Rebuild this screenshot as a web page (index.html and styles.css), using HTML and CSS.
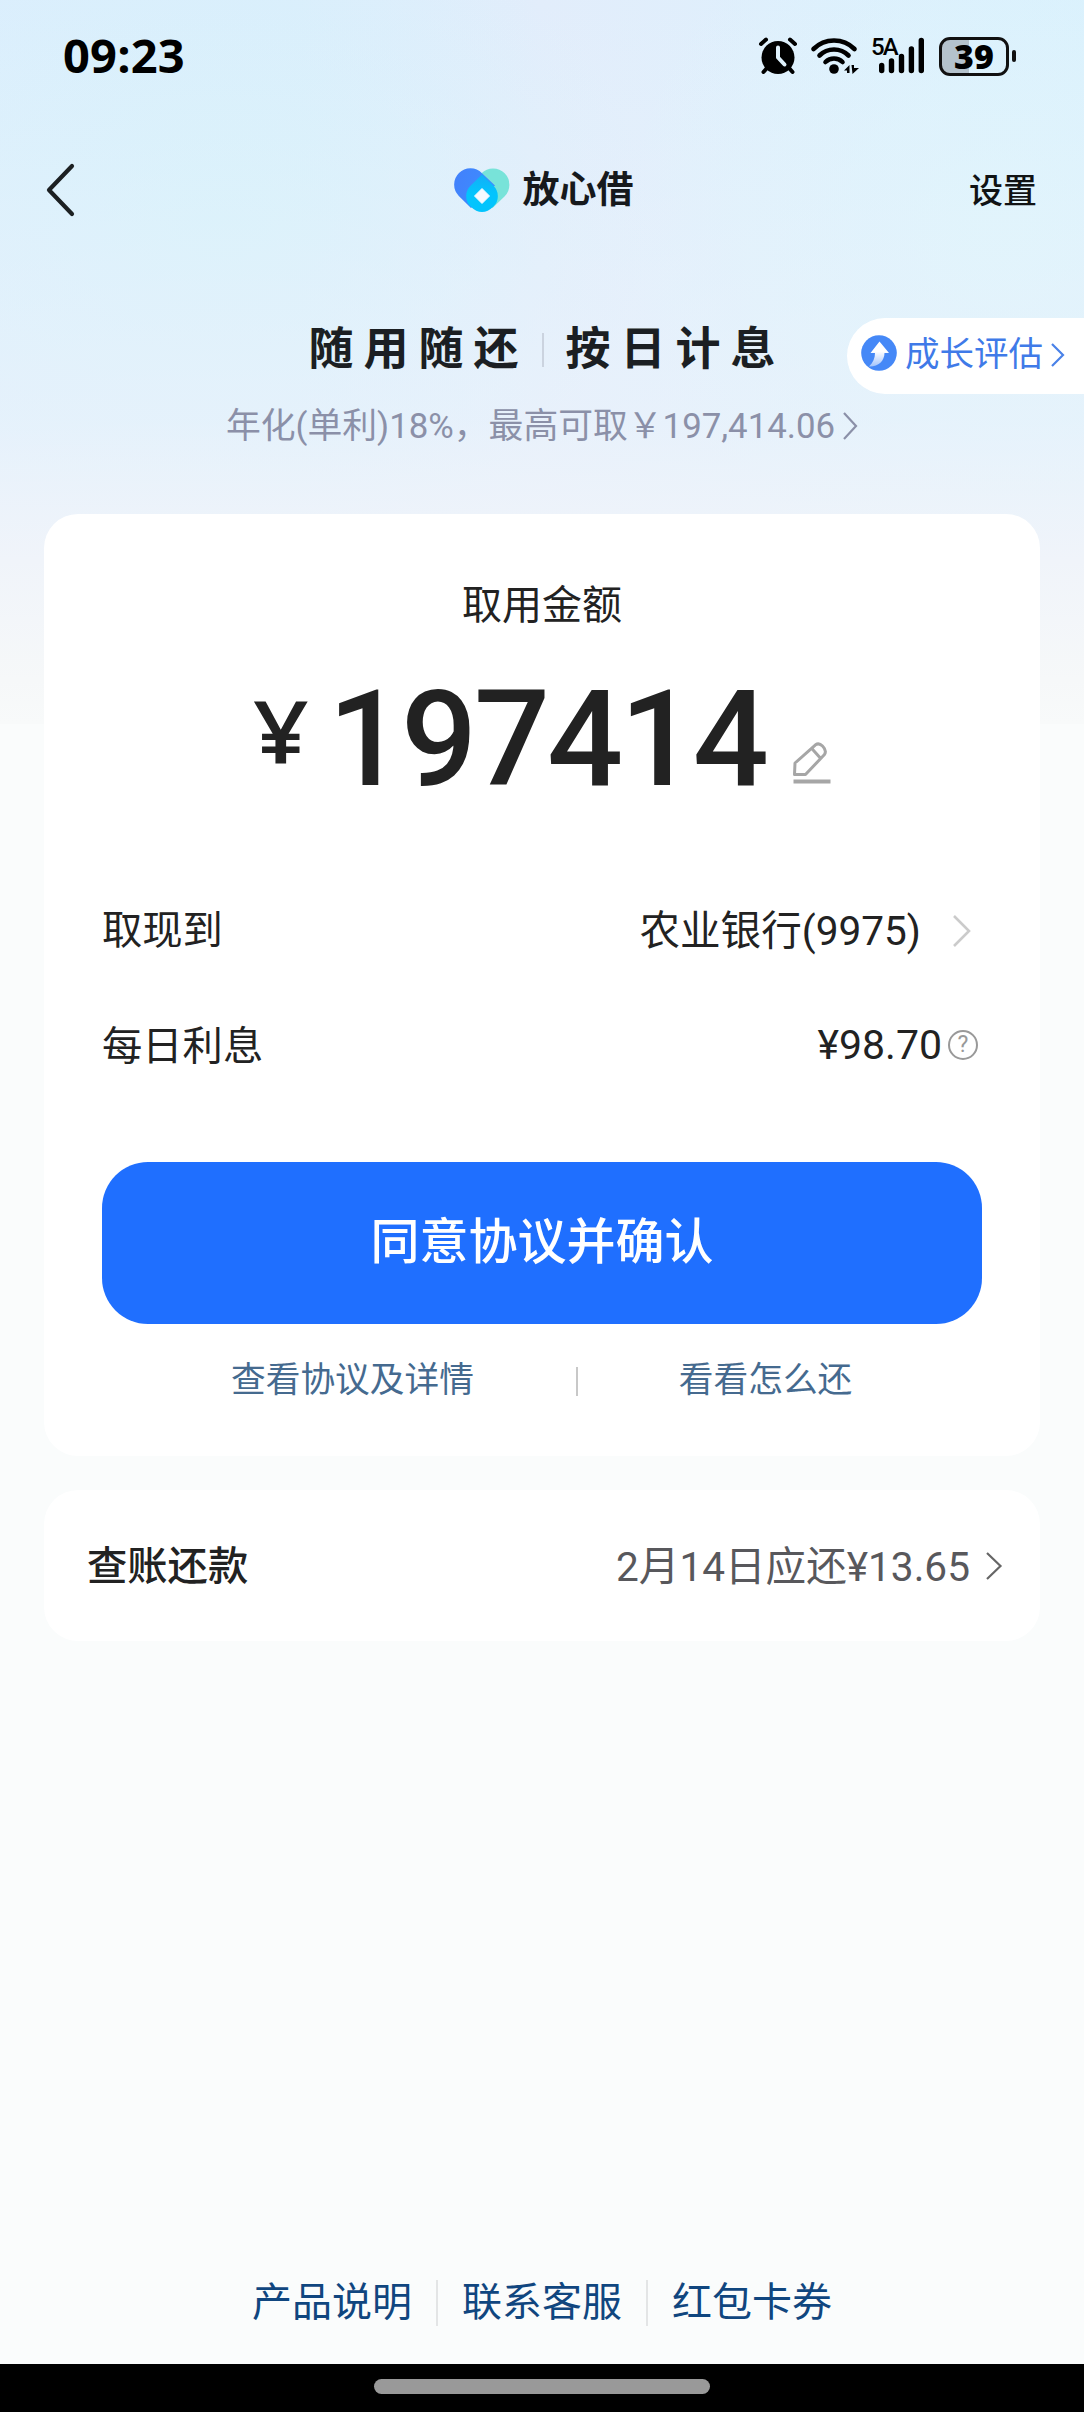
FILE: index.html
```html
<!DOCTYPE html>
<html lang="zh-CN">
<head>
<meta charset="utf-8">
<title>放心借</title>
<link rel="stylesheet" href="styles.css">
</head>
<body>
<div class="screen">
  <header class="status-bar">
    <span class="time">09:23</span>
    <div class="status-icons">
      <svg class="alarm" width="40" height="40" viewBox="0 0 40 40">
        <circle cx="20" cy="21.5" r="16.5"/>
        <path d="M3 8 L8 3.6 M32 3.6 L37 8 M9 32 L5.5 36 M31 32 L34.5 36" stroke="#000" stroke-width="4" stroke-linecap="round"/>
        <path d="M20 11.5 V21.5 L26.5 28.5" fill="none" stroke="#dff1fc" stroke-width="4" stroke-linecap="round" stroke-linejoin="round"/>
      </svg>
      <svg class="wifi" width="50" height="40" viewBox="0 0 50 40">
        <g fill="none" stroke="#000" stroke-width="4.6" stroke-linecap="round">
          <path d="M3.5 13 A29 29 0 0 1 44.500 13"/>
          <path d="M9.500 19.500 A20.500 20.500 0 0 1 38.500 19.500"/>
          <path d="M15.500 26 A12 12 0 0 1 32.500 26"/>
        </g>
        <circle cx="24" cy="33" r="4.800"/>
        <path d="M34 34.500 L39.500 29 V37 H37 V34.500 Z M41.500 29 H44 V32 H49 L42.500 38 Z"/>
      </svg>
      <div class="signal">
        <span class="network">5A</span>
        <svg width="46" height="38" viewBox="0 0 46 38">
          <path d="M2.700 28.500V33.500M12.500 24V33.500M22.500 19.500V33.500M32.400 12V33.500M42.300 3.500V33.500" stroke="#000" stroke-width="5.400" stroke-linecap="round"/>
        </svg>
      </div>
      <div class="battery"><span>39</span></div>
      <i class="battery-nub"></i>
    </div>
  </header>

  <nav class="nav">
    <svg class="back" width="32" height="56" viewBox="0 0 32 56"><path d="M27 4 L4 28 L27 52" fill="none" stroke="#1c2022" stroke-width="4.200" stroke-linecap="round" stroke-linejoin="round"/></svg>
    <div class="brand">
      <svg width="56" height="45" viewBox="0 0 56 45">
        <defs>
          <linearGradient id="blue" x1="0" y1="0" x2="1" y2="0.300"><stop offset="0" stop-color="#4280fb"/><stop offset="1" stop-color="#3d8dff"/></linearGradient>
          <linearGradient id="cyan" x1="0" y1="0" x2="0" y2="1"><stop offset="0" stop-color="#14aef6"/><stop offset="0.500" stop-color="#03c4fd"/></linearGradient>
        </defs>
        <path d="M27.500 5.200 A16 16 0 0 1 50.500 28.500 L38.500 40 L16.500 18 Z" fill="#78e3d9"/>
        <path d="M28 5.200 A16.200 16.200 0 0 0 4.800 28 L17 40 L41 17.500 Z" fill="url(#blue)"/>
        <path d="M28 6.500 L39.500 17.800 A14.500 14.500 0 0 1 39.500 38.500 Q28 49.500 16.500 38.500 A14.500 14.500 0 0 1 16.500 17.800 Z" fill="url(#cyan)"/>
        <path d="M28 20.500 L35.500 28 L28 35.500 L20.500 28 Z" fill="#f4faff" stroke="#f4faff" stroke-linejoin="round"/>
      </svg>
      <span class="brand-name">放心借</span>
    </div>
    <a class="settings">设置</a>
  </nav>

  <section class="hero">
    <h1 class="slogan"><span>随用随还</span><i></i><span>按日计息</span></h1>
    <p class="rate">年化(单利)18%&#65292;最高可取&#65509;197,414.06<svg width="16" height="30" viewBox="0 0 16 30"><path d="M2 2 L14 15 L2 28" fill="none" stroke="#8b90a8" stroke-width="2.200"/></svg></p>
    <a class="growth">
      <svg width="36" height="38" viewBox="0 0 36 38">
        <defs><linearGradient id="arrow" x1="0" y1="0" x2="0" y2="1"><stop offset="0.400" stop-color="#fff"/><stop offset="1" stop-color="#fff" stop-opacity="0.500"/></linearGradient></defs>
        <circle cx="18" cy="19" r="17.800" fill="#4588f7"/>
        <path d="M18.500 7.500 L28 19 H23.500 C23.500 27 17 33 8 32.500 C12 29 14 24 14 19 H9.500 Z" fill="url(#arrow)"/>
      </svg>
      <span>成长评估</span>
      <svg class="growth-chevron" width="16" height="26" viewBox="0 0 16 26"><path d="M3 2 L14 13 L3 24" fill="none" stroke="#4a82e8" stroke-width="2.200"/></svg>
    </a>
  </section>

  <main class="card loan">
    <h2 class="loan-label">取用金额</h2>
    <div class="amount">
      <span class="yen">&#165;</span>
      <span class="digits">197414</span>
      <svg width="40" height="44" viewBox="0 0 40 44" fill="none" stroke="#a6a6a6" stroke-width="3">
        <path d="M3 22 L23.500 3.800 Q27 1.500 30.500 5 Q35 9.500 32.500 13.500 L13.500 33.500 H2.500 Z M20 7.800 L28.500 17.300" stroke-linejoin="round"/>
        <path d="M1.500 40.500 H38.500" stroke-width="4"/>
      </svg>
    </div>
    <div class="row bank">
      <span class="row-label">取现到</span>
      <span class="row-value">农业银行(9975)<svg width="20" height="36" viewBox="0 0 20 36"><path d="M2 3 L17 18 L2 33" fill="none" stroke="#cbcbcb" stroke-width="2.600"/></svg></span>
    </div>
    <div class="row interest">
      <span class="row-label">每日利息</span>
      <span class="row-value">¥98.70<i class="help">?</i></span>
    </div>
    <button class="confirm">同意协议并确认</button>
    <div class="links"><a>查看协议及详情</a><i></i><a>看看怎么还</a></div>
  </main>

  <section class="card repay">
    <span class="repay-title">查账还款</span>
    <span class="repay-value"><span>2月14日应还¥13.65</span><svg width="18" height="32" viewBox="0 0 18 32"><path d="M2 3 L15.500 16 L2 29" fill="none" stroke="#666" stroke-width="2.200"/></svg></span>
  </section>

  <footer class="footer"><a>产品说明</a><i></i><a>联系客服</a><i></i><a>红包卡券</a></footer>
  <div class="home-bar"><i></i></div>
</div>
</body>
</html>
```
FILE: styles.css
```css
* { box-sizing: border-box; margin: 0; padding: 0; }

body {
  font-family: Roboto, "Noto Sans CJK SC", sans-serif;
  color: #222;
  background: #fafcfc;
}

svg { display: block; flex: none; }

.screen {
  width: 1084px;
  height: 2412px;
  display: flex;
  flex-direction: column;
  overflow: hidden;
  background:
    linear-gradient(180deg, rgba(243, 245, 250, 0) 0, rgba(236, 243, 251, 0.600) 420px, #f0f4fa 560px, #f6f8f9 680px, #f8fafa 724px) 0 0 / 100% 724px no-repeat,
    radial-gradient(ellipse 430px 330px at 220px 220px, #d5f1fb 0, rgba(213, 241, 251, 0) 100%) 0 0 / 100% 724px no-repeat,
    radial-gradient(ellipse 380px 360px at 1000px 230px, #dcf4fc 0, rgba(220, 244, 252, 0) 100%) 0 0 / 100% 724px no-repeat,
    linear-gradient(90deg, #dceefd 0, #dceefc 300px, #e2edfb 540px, #dfeffc 760px, #daf0fd 1084px) 0 0 / 100% 724px no-repeat,
    #fafcfc;
}

/* Status bar */
.status-bar {
  flex: none;
  height: 112px;
  padding: 0 68px 0 63px;
  display: flex;
  justify-content: space-between;
  align-items: center;
  color: #000;
}
.time { font: 700 47px/60px "Open Sans", sans-serif; letter-spacing: 0.200px; margin-bottom: 3px; }
.status-icons { display: flex; align-items: center; }
.wifi { margin-left: 12px; }
.signal { width: 54px; height: 38px; margin-left: 11px; padding-left: 8px; position: relative; }
.network {
  position: absolute;
  left: 0;
  top: -2px;
  font: 500 24px/24px Roboto, sans-serif;
  letter-spacing: -2px;
}
.battery {
  width: 70px;
  height: 39px;
  margin-left: 14px;
  border: 3px solid #111;
  border-radius: 11px;
  background: linear-gradient(90deg, #b4c2cc 27px, transparent 27px);
  display: flex;
  align-items: center;
  justify-content: center;
  font: 800 34px/36px "Open Sans", sans-serif;
}
.battery-nub { width: 4px; height: 12px; margin-left: 3px; border-radius: 2px; background: #111; }

/* Navigation */
.nav {
  flex: none;
  height: 156px;
  padding: 0 47px 0 45px;
  display: grid;
  grid-template-columns: 1fr auto 1fr;
  align-items: center;
}
.brand { display: flex; align-items: center; gap: 13px; padding-left: 5px; }
.brand-name { font-size: 37px; line-height: 44px; font-weight: 700; color: #16191c; padding-top: 2px; }
.settings { justify-self: end; font-size: 34px; font-weight: 500; color: #101314; padding-bottom: 4px; }

/* Slogan */
.hero { flex: none; height: 246px; position: relative; padding-top: 50px; }
.slogan {
  height: 64px;
  display: flex;
  align-items: center;
  justify-content: center;
  font-size: 45px;
  line-height: 64px;
  font-weight: 700;
  letter-spacing: 10px;
  color: #1b1f23;
}
.slogan i { width: 2px; height: 34px; margin: 0 22px 0 13px; background: #cbd3df; }
.slogan span:last-child { margin-right: -10px; }
.rate {
  height: 50px;
  margin: 19px 0 0 226px;
  display: flex;
  align-items: center;
  font-size: 34.800px;
  line-height: 50px;
  color: #8b90a8;
}
.rate svg { margin-left: 7px; }
.growth {
  position: absolute;
  right: 0;
  top: 50px;
  width: 237px;
  height: 76px;
  padding: 0 19px 6px 14px;
  border-radius: 38px 0 0 38px;
  background: #fff;
  display: flex;
  align-items: center;
  font-size: 34.500px;
  color: #3f7ae8;
}
.growth span { margin-left: 8px; padding-bottom: 4px; }
.growth-chevron { margin: 4px 0 0 6px; }

/* Cards */
.card { flex: none; margin: 0 44px; border-radius: 34px; background: #fff; }
.loan { height: 942px; padding: 0 58px; display: flex; flex-direction: column; }
.loan-label {
  margin-top: 62px;
  font-size: 40px;
  line-height: 60px;
  font-weight: 400;
  text-align: center;
}
.amount {
  height: 130px;
  margin-top: 39px;
  padding-left: 151px;
  display: flex;
  align-items: flex-start;
}
.yen {
  width: 75px;
  font: 600 87px/108px "Open Sans", sans-serif;
  transform: scaleX(1.12);
  transform-origin: left;
}
.digits { width: 459px; font-size: 134px; line-height: 130px; font-weight: 500; letter-spacing: -3.200px; }
.amount svg { margin: 66px 0 0 5px; }
.row { height: 60px; display: flex; align-items: center; justify-content: space-between; font-size: 40.300px; }
.row-label { padding-bottom: 5px; }
.row-value { display: flex; align-items: center; }
.bank { margin-top: 94px; padding-right: 10px; }
.bank .row-value { font-size: 40.600px; padding-bottom: 4px; }
.bank svg { margin: 8px 0 0 31px; }
.interest { margin-top: 56px; padding-right: 4px; }
.interest .row-value { font-size: 41px; }
.help {
  width: 30px;
  height: 30px;
  margin-left: 6px;
  border: 2px solid #999;
  border-radius: 50%;
  font-size: 23px;
  line-height: 26px;
  font-style: normal;
  text-align: center;
  color: #999;
}
.confirm {
  height: 162px;
  margin-top: 87px;
  padding-bottom: 10px;
  border: 0;
  border-radius: 46px;
  background: #1f6fff;
  font: 500 49px/72px "Noto Sans CJK SC", sans-serif;
  color: #fff;
}
.links { margin-top: 31px; padding-left: 129px; display: flex; align-items: center; font-size: 34.700px; line-height: 50px; color: #456a8f; }
.links i { width: 2px; height: 29px; margin: 3px 101px 0 102px; background: #c8c8c8; }

.repay {
  height: 151px;
  margin-top: 34px;
  padding: 0 37px 0 43px;
  display: flex;
  align-items: center;
  justify-content: space-between;
  font-size: 40.300px;
}
.repay-title { font-weight: 500; padding-bottom: 6px; }
.repay-value { display: flex; align-items: center; color: #58585c; font-size: 40.600px; }
.repay-value span { padding-bottom: 5px; }
.repay-value svg { margin-left: 15px; }

/* Bottom links */
.footer {
  height: 60px;
  margin: auto 0 31px;
  display: flex;
  align-items: center;
  justify-content: center;
  gap: 24px;
  font-size: 40px;
  line-height: 60px;
  color: #10467f;
}
.footer i { width: 2px; height: 46px; background: #e3e5e6; }
.home-bar { flex: none; height: 48px; background: #000; display: flex; justify-content: center; padding-top: 15px; }
.home-bar i { width: 336px; height: 15px; border-radius: 7.500px; background: #999; }
```
